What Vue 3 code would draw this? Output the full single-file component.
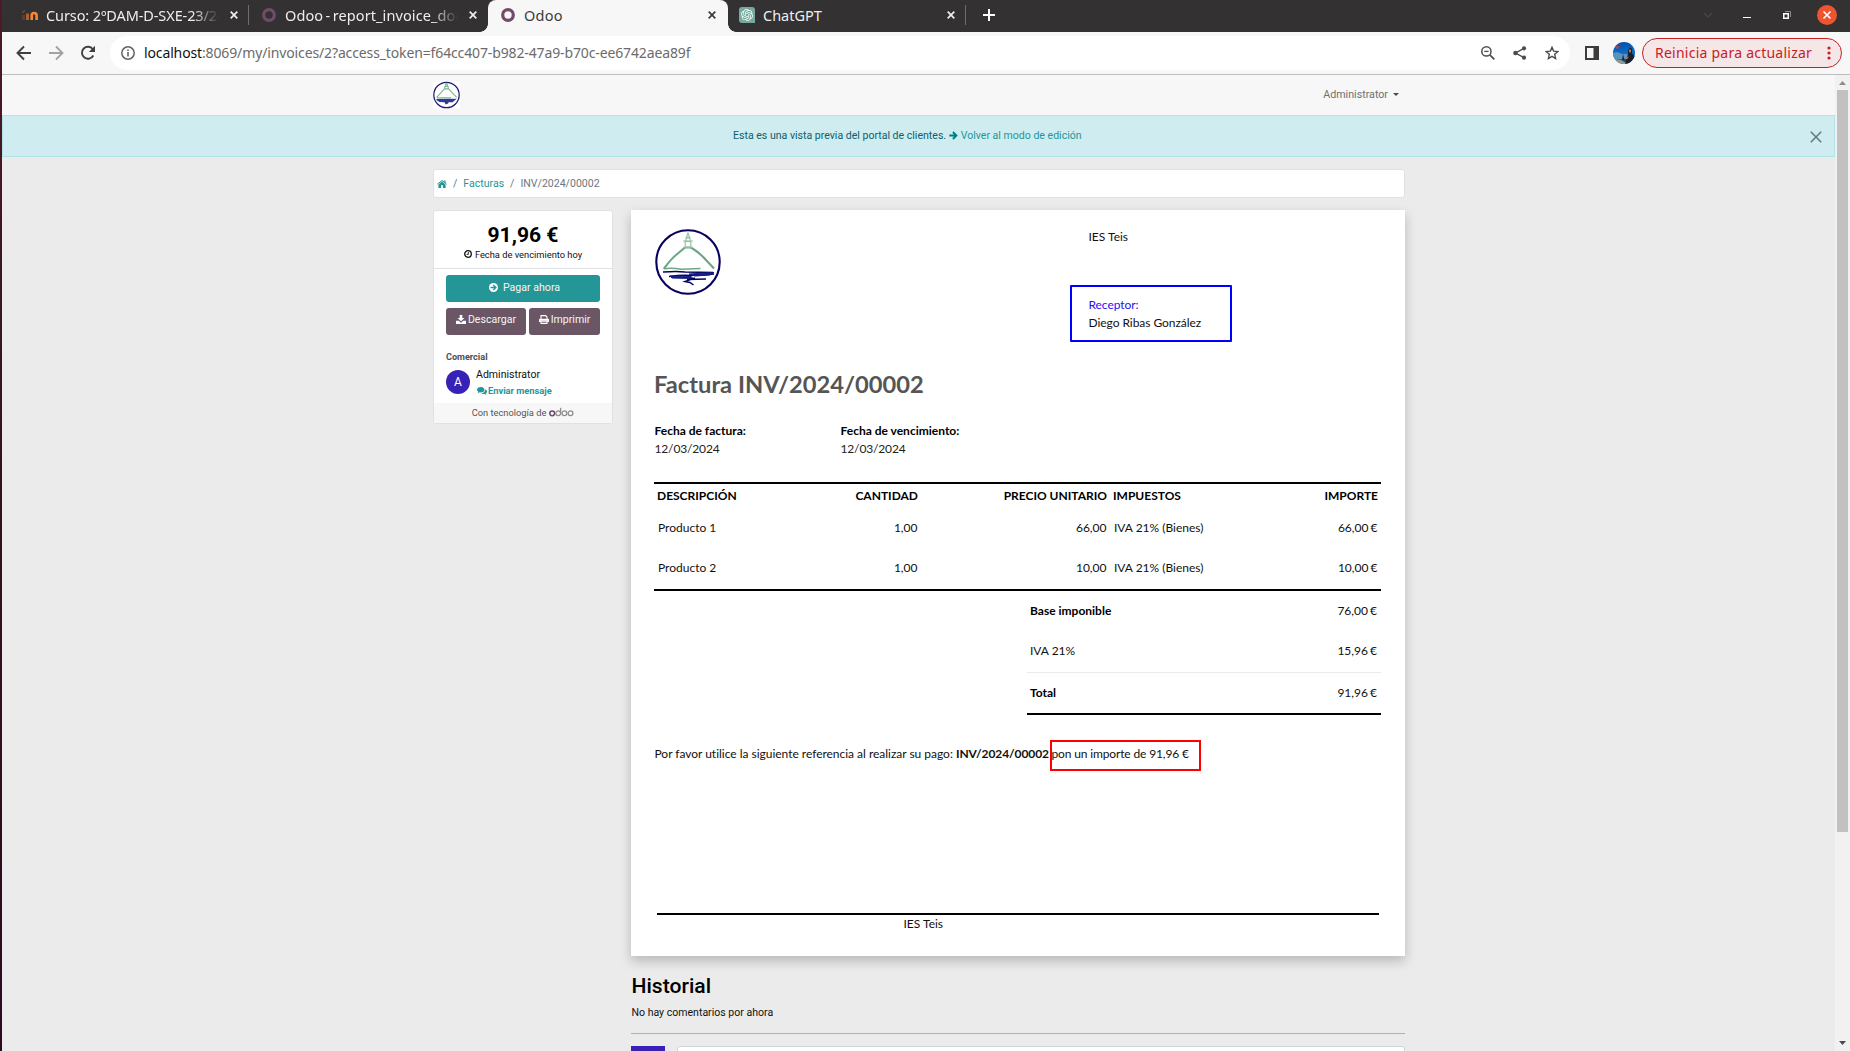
<script setup>
const lines = [
  { name: 'Producto 1', qty: '1,00', price: '66,00', tax: 'IVA 21% (Bienes)', amount: '66,00 €' },
  { name: 'Producto 2', qty: '1,00', price: '10,00', tax: 'IVA 21% (Bienes)', amount: '10,00 €' },
]
</script>

<template>
  <div class="screen">
    <div class="desktop-edge"></div>
    <div class="window">
      <div class="tabs">
        <div class="tab">
          <svg class="fav" viewBox="0 0 16 16">
            <g fill="none" stroke-width="2.800">
              <path d="M1.600 13V8" stroke="#5a4034" />
              <path d="M0 6l3-2.500" stroke="#6a5146" stroke-width="1.200" />
              <path d="M5.500 13V6.500" stroke="#b8622c" />
              <path d="M9.700 13V8.200Q9.700 6 12.100 6Q14.600 6 14.600 8.200V13" stroke="#f98635" stroke-width="2.600" />
            </g>
          </svg>
          <span class="tab-title fade t1">Curso: 2ºDAM-D-SXE-23/24</span>
          <svg class="tab-x" viewBox="0 0 8 8"><path d="M.7.7l6.600 6.600M7.300.7L.7 7.300" /></svg>
          <i class="sep"></i>
        </div>
        <div class="tab">
          <svg class="fav" viewBox="0 0 16 16"><circle cx="8" cy="8" r="5.300" fill="none" stroke="#714b67" stroke-width="3.200" /></svg>
          <span class="tab-title fade t2">Odoo - report_invoice_doc</span>
          <svg class="tab-x" viewBox="0 0 8 8"><path d="M.7.7l6.600 6.600M7.300.7L.7 7.300" /></svg>
        </div>
        <div class="tab active">
          <svg class="fav" viewBox="0 0 16 16"><circle cx="8" cy="8" r="5.300" fill="none" stroke="#714b67" stroke-width="3.200" /></svg>
          <span class="tab-title t3">Odoo</span>
          <svg class="tab-x" viewBox="0 0 8 8"><path d="M.7.7l6.600 6.600M7.300.7L.7 7.300" /></svg>
        </div>
        <div class="tab">
          <svg class="fav" viewBox="0 0 16 16">
            <path d="M3 0H13a3 3 0 0 1 3 3V16H3a3 3 0 0 1-3-3V3a3 3 0 0 1 3-3Z" fill="#74aa9c" />
            <g transform="translate(2 2) scale(.5)" fill="#fff"><path d="M22.2819 9.8211a5.9847 5.9847 0 0 0-.5157-4.9108 6.0462 6.0462 0 0 0-6.5098-2.9A6.0651 6.0651 0 0 0 4.9807 4.1818a5.9847 5.9847 0 0 0-3.9977 2.9 6.0462 6.0462 0 0 0 .7427 7.0966 5.98 5.98 0 0 0 .511 4.9107 6.051 6.051 0 0 0 6.5146 2.9001A5.9847 5.9847 0 0 0 13.2599 24a6.0557 6.0557 0 0 0 5.7718-4.2058 5.9894 5.9894 0 0 0 3.9977-2.9001 6.0557 6.0557 0 0 0-.7475-7.0729zm-9.022 12.6081a4.4755 4.4755 0 0 1-2.8764-1.0408l.1419-.0804 4.7783-2.7582a.7948.7948 0 0 0 .3927-.6813v-6.7369l2.02 1.1686a.071.071 0 0 1 .038.052v5.5826a4.504 4.504 0 0 1-4.4945 4.4944zm-9.6607-4.1254a4.4708 4.4708 0 0 1-.5346-3.0137l.142.0852 4.783 2.7582a.7712.7712 0 0 0 .7806 0l5.8428-3.3685v2.3324a.0804.0804 0 0 1-.0332.0615L9.74 19.9502a4.4992 4.4992 0 0 1-6.1408-1.6464zM2.3408 7.8956a4.485 4.485 0 0 1 2.3655-1.9728V11.6a.7664.7664 0 0 0 .3879.6765l5.8144 3.3543-2.0201 1.1685a.0757.0757 0 0 1-.071 0l-4.8303-2.7865A4.504 4.504 0 0 1 2.3408 7.872zm16.5963 3.8558L13.1038 8.364 15.1192 7.2a.0757.0757 0 0 1 .071 0l4.8303 2.7913a4.4944 4.4944 0 0 1-.6765 8.1042v-5.6772a.79.79 0 0 0-.407-.667zm2.0107-3.0231l-.142-.0852-4.7735-2.7818a.7759.7759 0 0 0-.7854 0L9.409 9.2297V6.8974a.0662.0662 0 0 1 .0284-.0615l4.8303-2.7866a4.4992 4.4992 0 0 1 6.6802 4.66zM8.3065 12.863l-2.02-1.1638a.0804.0804 0 0 1-.038-.0567V6.0742a4.4992 4.4992 0 0 1 7.3757-3.4537l-.142.0805L8.704 5.459a.7948.7948 0 0 0-.3927.6813zm1.0976-2.3654l2.602-1.4998 2.6069 1.4998v2.9994l-2.5974 1.4997-2.6067-1.4997Z" /></g>
          </svg>
          <span class="tab-title">ChatGPT</span>
          <svg class="tab-x" viewBox="0 0 8 8"><path d="M.7.7l6.600 6.600M7.300.7L.7 7.300" /></svg>
          <i class="sep"></i>
        </div>
        <svg class="plus" viewBox="0 0 12 12"><path d="M6 0V12M0 6H12" stroke="#fff" stroke-width="2" /></svg>
        <div class="win-controls">
          <svg width="10" height="6" viewBox="0 0 10 6"><path d="M1 1l4 4 4-4" fill="none" stroke="#464445" stroke-width="1.500" /></svg>
          <svg width="8" height="8" viewBox="0 0 8 8"><path d="M0 6.500H8" stroke="#fff" /></svg>
          <svg width="8" height="8" viewBox="0 0 8 8" fill="none"><path d="M2 .5H7.500V6" stroke="#8d8c8c" /><path d="M.75 2.750H5.250V7.250H.75Z" stroke="#fff" stroke-width="1.500" /></svg>
          <svg width="20" height="20" viewBox="0 0 20 20"><circle cx="10" cy="10" r="10" fill="#ee5430" /><path d="M6.500 6.500l7 7M13.500 6.500l-7 7" stroke="#fff" stroke-width="1.600" /></svg>
        </div>
      </div>

      <div class="toolbar">
        <div class="nav-icons">
          <svg width="16" height="16" viewBox="0 0 16 16" fill="none" stroke="#3f3f3f" stroke-width="1.900"><path d="M15 8H2M8 1.500L1.500 8 8 14.500" /></svg>
          <svg width="16" height="16" viewBox="0 0 16 16" fill="none" stroke="#a3a3a3" stroke-width="1.900"><path d="M1 8H14M8 1.500L14.500 8 8 14.500" /></svg>
          <svg width="16" height="16" viewBox="0 0 16 16"><path d="M13.300 10.500A6 6 0 1 1 12.800 4.200" fill="none" stroke="#3f3f3f" stroke-width="1.900" /><path d="M15 .8V7H8.800Z" fill="#3f3f3f" /></svg>
        </div>
        <div class="omnibox">
          <svg width="14" height="14" viewBox="0 0 14 14"><circle cx="7" cy="7" r="6.200" fill="none" stroke="#5f6368" stroke-width="1.500" /><path d="M7 6V10.500M7 3.400V5" stroke="#5f6368" stroke-width="1.600" /></svg>
          <span class="url"><b>localhost</b>:8069/my/invoices/2?access_token=f64cc407-b982-47a9-b70c-ee6742aea89f</span>
          <div class="omni-icons">
            <svg width="14" height="14" viewBox="0 0 14 14" fill="none" stroke="#505050" stroke-width="1.500"><circle cx="5.400" cy="5.400" r="4.600" /><path d="M3.200 5.400H7.600" stroke-width="1.300" /><path d="M8.800 8.800L13.300 13.300" stroke-width="1.800" /></svg>
            <svg width="14" height="14" viewBox="0 0 14 14" fill="#4c4c4c"><path d="M11 2.300L2.500 7 11 11.700" fill="none" stroke="#4c4c4c" stroke-width="1.400" /><circle cx="11" cy="2.300" r="2.100" /><circle cx="2.500" cy="7" r="2.300" /><circle cx="11" cy="11.700" r="2.100" /></svg>
            <svg width="14" height="14" viewBox="0 0 14 14"><path d="M7 1.300L8.600 5.100 12.900 5.500 9.700 8.300 10.600 12.500 7 10.300 3.400 12.500 4.300 8.300 1.100 5.500 5.400 5.100Z" fill="none" stroke="#4c4c4c" stroke-width="1.400" /></svg>
          </div>
        </div>
        <svg class="panel-icon" width="14" height="14" viewBox="0 0 14 14"><path d="M0 0H14V14H0ZM2 2V12H8.500V2Z" fill="#3c3c3c" fill-rule="evenodd" /></svg>
        <svg class="profile" width="22" height="22" viewBox="0 0 22 22">
          <defs>
            <clipPath id="disc"><circle cx="11" cy="11" r="11" /></clipPath>
            <linearGradient id="sky" x1="0" y1="0" x2="0" y2="1"><stop offset="0" stop-color="#0750a8" /><stop offset=".6" stop-color="#0b72cf" /><stop offset="1" stop-color="#28536f" /></linearGradient>
          </defs>
          <g clip-path="url(#disc)">
            <path d="M0 0H22V22H0Z" fill="url(#sky)" />
            <path d="M0 11l4-1 5 2 5 0v5H0Z" fill="#5b93bb" />
            <path d="M1.500 5l5-1.200-2 3.400Z" fill="#e0343c" />
            <path d="M9 18l1-6 1 4 1 3Z" fill="#1c2733" />
            <path d="M12 22l1-5 2-3 0-6 2-2.500 2 1.500 0 4 3 4v7Z" fill="#17202c" />
            <path d="M15.500 7.500h2.500v3h-1.500ZM12 16l4-1.500-2 3Z" fill="#a87862" />
            <path d="M2 17l6 1 5 3-2 2H4Z" fill="#8f9a93" />
          </g>
        </svg>
        <div class="update">
          <span>Reinicia para actualizar</span>
          <svg width="4" height="14" viewBox="0 0 4 14" fill="#c5221f"><circle cx="2" cy="2" r="1.600" /><circle cx="2" cy="7" r="1.600" /><circle cx="2" cy="12" r="1.600" /></svg>
        </div>
      </div>

      <div class="viewport">
        <div class="page">
          <header class="navbar">
            <svg class="brand" viewBox="0 0 66 66">
              <rect width="66" height="66" fill="#fff" />
              <circle cx="33" cy="33" r="31" fill="none" stroke="#1b1775" stroke-width="3" />
              <path d="M9 39L28 18H38L58 39M9 40H44M29 18V12H37V18M31 11V7H35V11M33 7V3" fill="none" stroke="#7db795" stroke-width="2.600" />
              <path d="M8 43L58 42 52 47 48 51 38 51 37 54 31 56 28 51 16 50 9 46Z" fill="#303a93" />
            </svg>
            <span class="user">Administrator <i></i></span>
          </header>

          <div class="alert">
            <span>Esta es una vista previa del portal de clientes. </span>
            <svg width="9" height="9" viewBox="0 0 9 9" fill="none" stroke="#017e84" stroke-width="1.900"><path d="M.3 4.500H7M3.900 1L7.400 4.500 3.900 8" /></svg>
            <a>Volver al modo de edición</a>
            <svg class="dismiss" width="12" height="12" viewBox="0 0 12 12"><path d="M.8.8L11.200 11.200M11.200.8L.8 11.200" stroke="#66767a" stroke-width="1.500" /></svg>
          </div>

          <main class="container">
            <nav class="crumbs">
              <svg width="10" height="8" viewBox="0 0 10 8" fill="#259698"><path d="M5 1.500L8.600 4.600V8H5.900V5.300H4.100V8H1.400V4.600Z" /><path d="M.4 4.200L5 .5 9.600 4.200" fill="none" stroke="#259698" stroke-width="1" /><path d="M7.300.4H8.600V3H7.300Z" /></svg>
              <span class="slash s1">/</span><a>Facturas</a><span class="slash">/</span><span>INV/2024/00002</span>
            </nav>

            <div class="columns">
              <aside class="card">
                <div class="summary">
                  <div class="amount">91,96 €</div>
                  <div class="due">
                    <svg width="8" height="8" viewBox="0 0 8 8" fill="none" stroke="#111"><circle cx="4" cy="4" r="3.300" stroke-width="1.300" /><path d="M4.300 2V4.400H2.600" stroke-width=".9" /></svg>
                    Fecha de vencimiento hoy
                  </div>
                </div>
                <div class="actions">
                  <button class="btn pay">
                    <svg width="9" height="9" viewBox="0 0 9 9"><circle cx="4.500" cy="4.500" r="4.500" fill="#fff" /><path d="M1.500 4.500H6.500M4.300 2L6.900 4.500 4.300 7" fill="none" stroke="#259698" stroke-width="1.400" /></svg>
                    Pagar ahora
                  </button>
                  <div class="pair">
                    <button class="btn dl">
                      <svg width="10" height="9" viewBox="0 0 10 9" fill="#fff"><path d="M3.700 0H6.300V3H8.400L5 6.300 1.600 3H3.700Z" /><path d="M0 5.800H2.800L5 7.800 7.200 5.800H10V9H0Z" /></svg>Descargar
                    </button>
                    <button class="btn pr">
                      <svg width="10" height="9" viewBox="0 0 10 9"><path d="M2 4V.6H6.600L8 2V4M2 6.200V8.400H8V6.200Z" fill="none" stroke="#fff" stroke-width="1.100" /><path d="M0 7V4.800Q0 3.700 1.100 3.700H8.900Q10 3.700 10 4.800V7H8.300V5.800H1.700V7Z" fill="#fff" /></svg>Imprimir
                    </button>
                  </div>
                  <div class="label">Comercial</div>
                  <div class="contact">
                    <div class="avatar">A</div>
                    <div>
                      <div class="name">Administrator</div>
                      <a class="message">
                        <svg width="10" height="8" viewBox="0 0 10 8" fill="#259698"><path d="M3.800 0C6 0 7.500 1.200 7.500 2.700S6 5.400 3.800 5.400Q3.200 5.400 2.700 5.300 1.800 6 .6 6.200 1.200 5.500 1.200 4.700 0 3.900 0 2.700C0 1.200 1.600 0 3.800 0Z" /><path d="M8.200 2.200Q10 3 10 4.400 10 5.600 8.900 6.400 9 7.200 9.600 7.900 8.300 7.700 7.500 7 5.400 7.300 4 6.300 8 6 8.200 2.200Z" /></svg>Enviar mensaje
                      </a>
                    </div>
                  </div>
                </div>
                <div class="powered">
                  <span>Con tecnología de</span>
                  <svg width="25" height="10" viewBox="0 0 25 10" fill="none" stroke="#8f8f8f" stroke-width="1.300"><circle cx="3.200" cy="6.300" r="2.400" stroke="#714b67" stroke-width="1.500" /><circle cx="9.200" cy="6.300" r="2.400" /><path d="M11.600 6.300V.8" /><circle cx="15.400" cy="6.300" r="2.400" /><circle cx="21.500" cy="6.300" r="2.400" /></svg>
                </div>
              </aside>

              <section class="content">
                <article class="paper">
                  <div class="paper-head">
                    <svg class="logo" width="66" height="66" viewBox="0 0 66 66" fill="none">
                      <circle cx="33" cy="33" r="31.700" stroke="#07005e" stroke-width="2.100" />
                      <path d="M9 39.500Q17 29 21 26L30 18.500H36Q45 24 51 31L59 39.500" stroke="#6aa883" stroke-width="2.100" />
                      <path d="M8.500 39.700Q18 38.800 26 40.200L45.500 39.600" stroke="#6aa883" stroke-width="1.500" />
                      <path d="M28 18.500H38M30.200 18V12.500H35.800V18M28 12H38M31 12V9H35V12M31.500 8.500L33 4 34.500 8.500Z" stroke="#90bda2" stroke-width="1.100" />
                      <path d="M8 43Q22 42 30 43L58 43.500M14 47.500Q28 45.500 36 46.500L59 45" stroke="#07005e" stroke-width="1.500" />
                      <path d="M34 45L59 43.500 55 46 40 47ZM15 47L36 47.500 38 49.500 17 49Z" fill="#121c85" stroke="#121c85" />
                      <path d="M32 50.500L51 50M40 49L30 52.500 35 53.500 38.500 56" stroke="#07005e" stroke-width="1.500" />
                    </svg>
                    <div class="parties">
                      <div class="company">IES Teis</div>
                      <div class="receiver"><div class="blue">Receptor:</div><div>Diego Ribas González</div></div>
                    </div>
                  </div>
                  <h2>Factura INV/2024/00002</h2>
                  <div class="dates">
                    <div><b>Fecha de factura:</b><span>12/03/2024</span></div>
                    <div><b>Fecha de vencimiento:</b><span>12/03/2024</span></div>
                  </div>
                  <div class="table">
                    <div class="row thead"><span>DESCRIPCIÓN</span><span class="r">CANTIDAD</span><span class="r">PRECIO UNITARIO</span><span>IMPUESTOS</span><span class="r">IMPORTE</span></div>
                    <div v-for="l in lines" :key="l.name" class="row item">
                      <span>{{ l.name }}</span><span class="r">{{ l.qty }}</span><span class="r">{{ l.price }}</span><span>{{ l.tax }}</span><span class="r euro">{{ l.amount }}</span>
                    </div>
                  </div>
                  <div class="totals">
                    <div><b>Base imponible</b><span class="euro">76,00 €</span></div>
                    <div class="line"><span>IVA 21%</span><span class="euro">15,96 €</span></div>
                    <div><b>Total</b><span class="euro">91,96 €</span></div>
                  </div>
                  <p class="note"><span class="lead">Por favor utilice la siguiente referencia al realizar su pago: </span><b>INV/2024/00002</b><span class="tail">pon un importe de 91,96 €<i class="mark"></i></span></p>
                  <footer>IES Teis</footer>
                </article>

                <h3>Historial</h3>
                <div class="empty">No hay comentarios por ahora</div>
                <div class="composer"><div class="me"></div><div class="field"></div></div>
              </section>
            </div>
          </main>
        </div>
        <div class="scrollbar">
          <svg width="7" height="4" viewBox="0 0 7 4"><path d="M0 4L3.500 0 7 4Z" fill="#8c8c8c" /></svg>
          <div class="thumb"></div>
          <svg width="7" height="4" viewBox="0 0 7 4"><path d="M0 0L3.500 4 7 0Z" fill="#4b4b4b" /></svg>
        </div>
      </div>
    </div>
  </div>
</template>

<style>
body { margin: 0; overflow: hidden; }
</style>

<style scoped>
* { box-sizing: border-box; }
svg { display: block; flex: none; }
.screen { display: flex; width: 1850px; height: 1051px; overflow: hidden; font-family: Roboto, sans-serif; }
.desktop-edge { width: 2px; background: linear-gradient(#4c1a25, #32101f 50%, #2c0b20); }
.window { width: 1848px; display: flex; flex-direction: column; }

.tabs { height: 32px; background: #333132; display: flex; padding-left: 8px; font-family: "Noto Sans", sans-serif; font-size: 14.5px; color: #eee; }
.tab { width: 239px; height: 32px; display: flex; align-items: center; padding: 0 11px 2px 12px; position: relative; }
.tab.active { background: #f7f7f7; color: #3c3c3c; border-radius: 8px 8px 0 0; width: 240px; margin-right: -1px; }
.tab.active::before, .tab.active::after { content: ""; position: absolute; bottom: 0; width: 8px; height: 8px; }
.tab.active::before { left: -8px; background: radial-gradient(circle at 0 0, #333132 7.500px, #f7f7f7 8px); }
.tab.active::after { right: -8px; background: radial-gradient(circle at 100% 0, #333132 7.500px, #f7f7f7 8px); }
.fav { width: 16px; height: 16px; margin-right: 8px; }
.tab-title { width: 175px; line-height: 20px; white-space: nowrap; overflow: hidden; }
.fade { -webkit-mask-image: linear-gradient(90deg, #000 84%, transparent 99%); mask-image: linear-gradient(90deg, #000 84%, transparent 99%); }
.t1 { letter-spacing: -.1px; }
.t2 { letter-spacing: .1px; word-spacing: -1.5px; }
.t3 { letter-spacing: .25px; }
.tab-x { width: 8px; height: 8px; margin-left: 9px; }
.tab-x path { stroke: currentColor; stroke-width: 1.700; }
.sep { position: absolute; right: 0; top: 5px; width: 1px; height: 20px; background: #6f6e6e; }
.plus { width: 12px; height: 12px; margin: 9px 0 0 17px; }
.win-controls { margin-left: auto; margin-right: 13px; height: 30px; display: flex; align-items: center; }
.win-controls svg:nth-child(2) { margin-left: 30px; }
.win-controls svg:nth-child(3) { margin-left: 32px; }
.win-controls svg:nth-child(4) { margin-left: 26px; }

.toolbar { height: 43px; background: #f7f7f7; border-bottom: 1px solid #bdbdbd; display: flex; align-items: center; }
.nav-icons { display: flex; gap: 16px; margin-left: 14px; width: 94px; }
.omnibox { width: 1460px; height: 34px; border-radius: 17px; background: #fff; display: flex; align-items: center; padding: 0 11px 0 11px; }
.url { margin-left: 9px; font: 14px/20px "Noto Sans", sans-serif; color: #6b6b6b; white-space: nowrap; letter-spacing: -.13px; }
.url b { font-weight: 400; color: #111; }
.omni-icons { margin-left: auto; display: flex; gap: 18px; }
.panel-icon { margin-left: 15px; }
.profile { margin-left: 14px; }
.update { margin-left: 7px; width: 200px; height: 30px; border: 1px solid #c5221f; border-radius: 15px; background: #f5e6e7; color: #c5221f; display: flex; align-items: center; justify-content: space-between; padding: 0 10px 0 12px; font: 14px/20px "Noto Sans", sans-serif; letter-spacing: .24px; white-space: nowrap; }

.viewport { height: 976px; display: flex; }
.page { width: 1833px; background: #ebebeb; overflow: hidden; }
.navbar { height: 40px; background: #f7f7f7; display: flex; align-items: center; justify-content: space-between; padding: 0 436px 0 431px; }
.brand { width: 27px; height: 28px; }
.user { font-size: 10.700px; line-height: 14px; color: #6f7072; display: flex; align-items: center; }
.user i { border: 3px solid transparent; border-top-color: #4c4c4c; border-bottom: 0; margin-left: 5px; margin-top: -2px; }
.alert { position: relative; height: 42px; background: #cfecf0; border: 1px solid #b3e3e9; display: flex; align-items: center; padding: 0 0 2px 730px; font-size: 10.550px; color: #0c616b; white-space: pre; }
.alert svg { margin: 0 3px 0 0; }
.alert a, .crumbs a { color: #259698; }
.alert .dismiss { position: absolute; right: 12px; top: 15px; margin: 0; }

.container { width: 972px; margin-left: 431px; padding-top: 12px; }
.crumbs { height: 29px; background: #fff; border: 1px solid #dee2e6; border-radius: 3px; display: flex; align-items: center; padding-left: 3px; font-size: 10.550px; color: #6c757d; }
.crumbs .slash { margin: 0 6px; }
.columns { display: flex; margin-top: 12px; justify-content: space-between; }

.card { width: 180px; height: 214px; background: #fff; border: 1px solid #dee2e6; border-radius: 3px; display: flex; flex-direction: column; }
.summary { height: 58px; border-bottom: 1px solid #dee2e6; text-align: center; padding-top: 12px; }
.amount { font-size: 21.100px; line-height: 24px; font-weight: 700; color: #000; }
.due { height: 16px; margin-top: -1px; display: flex; align-items: center; justify-content: center; gap: 3px; font-size: 9.300px; color: #111; }
.actions { padding: 6px 12px 0; height: 135px; }
.btn { border: 0; border-radius: 3px; height: 27px; display: flex; align-items: center; justify-content: center; color: #f5f5f5; font: 10.600px Roboto, sans-serif; padding: 0 0 1px; }
.pay { width: 154px; background: #259698; gap: 5px; padding-left: 3px; }
.pair { display: flex; gap: 3px; margin-top: 6px; }
.pair .btn { background: #6b5665; gap: 2px; padding-bottom: 3px; }
.dl { width: 80px; }
.pr { width: 71px; }
.label { margin-top: 15px; height: 14px; line-height: 14px; font-size: 9.100px; font-weight: 700; color: #495057; }
.contact { display: flex; margin-top: 3px; gap: 6px; }
.avatar { width: 24px; height: 24px; border-radius: 50%; margin-top: 3px; background: #3721b7; color: #fff; font-size: 12px; line-height: 25px; text-align: center; }
.name { font-size: 10.550px; line-height: 16px; color: #111; }
.message { display: flex; align-items: center; gap: 1px; margin-left: 1px; font-size: 9.300px; line-height: 16px; font-weight: 700; color: #259698; }
.powered { flex: 1; background: #f7f7f7; display: flex; justify-content: center; gap: 3px; font-size: 9.300px; line-height: 20px; color: #555; }
.powered svg { margin-top: 4px; }

.content { width: 774px; }
.paper { height: 746px; background: #fff; box-shadow: 0 5px 11px rgba(0, 0, 0, .22); padding: 18px 24px 0 23px; font-family: Lato, sans-serif; font-size: 12px; line-height: 18px; color: #111; }
.paper-head { display: flex; height: 139px; }
.logo { margin: 1px 0 0 1px; }
.parties { margin-left: 349px; }
.company { padding-left: 18.5px; height: 57px; }
.receiver { width: 162px; height: 57px; border: 2px solid #00f; border-radius: 1px; padding: 9px 16.5px; white-space: nowrap; letter-spacing: -.05px; }
.blue { color: #1f12f5; }
h2 { margin: 0; height: 55px; font-size: 23.700px; line-height: 34px; font-weight: 700; color: #555; white-space: nowrap; }
.dates { display: flex; height: 60px; color: #000; }
.dates > div { width: 186px; display: flex; flex-direction: column; white-space: nowrap; padding-left: .5px; }
.dates span { color: #222; letter-spacing: -.15px; }
.table { border-top: 2px solid #000; border-bottom: 2px solid #000; height: 109px; }
.row { display: grid; grid-template-columns: 160px 107px 189px 180px 91px; height: 40px; line-height: 40px; white-space: nowrap; }
.row span { padding: 0 3.5px 0 4px; position: relative; top: 1px; }
.thead { height: 23px; line-height: 23px; font-weight: 700; color: #000; }
.thead span { padding: 0 3px; top: 0; }
.r { text-align: right; }
.euro { word-spacing: -1px; }
.totals { width: 354px; margin-left: auto; height: 124px; border-bottom: 2px solid #000; }
.totals div { height: 40px; line-height: 40px; display: flex; justify-content: space-between; padding: 0 4px 0 3px; }
.totals .line { height: 42px; border-bottom: 1px solid #e9ecef; }
.totals b { color: #000; }
.note { margin: 30px 0 0 .5px; height: 168px; white-space: pre; }
.lead { letter-spacing: -.02px; }
.note b { letter-spacing: -.08px; }
.tail { position: relative; letter-spacing: -.14px; margin-left: 2.5px; }
.mark { position: absolute; left: -1px; top: -6px; width: 151px; height: 31px; border: 2px solid #f00; }
footer { margin: 0 2px 0 3px; border-top: 2px solid #000; padding-left: 246.5px; line-height: 18px; }

h3 { margin: 18px 0 0 .5px; font-size: 21.100px; line-height: 24px; font-weight: 500; color: #000; }
.empty { margin: 7px 0 0 .5px; height: 28px; line-height: 16px; font-size: 10.550px; color: #111; }
.composer { border-top: 1px solid #b0b0b0; padding-top: 12px; display: flex; justify-content: space-between; }
.me { width: 34px; height: 34px; background: #3721b7; }
.field { width: 728px; height: 60px; background: #fff; border: 1px solid #ced4da; border-radius: 3px; }

.scrollbar { width: 15px; background: #f1f1f1; display: flex; flex-direction: column; align-items: center; padding: 6px 0; }
.thumb { width: 11px; height: 742px; background: #c1c1c1; margin-top: 5px; margin-bottom: auto; }
</style>
